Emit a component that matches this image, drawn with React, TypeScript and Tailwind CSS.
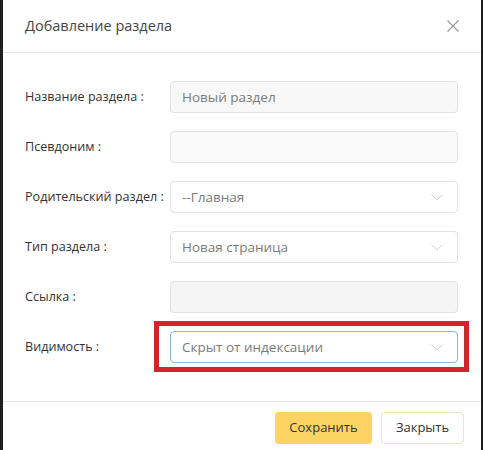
import React from 'react'

const font = { fontFamily: '"Open Sans", "Noto Sans", sans-serif' }

const Chevron = () => (
  <svg width="12" height="7" viewBox="0 0 12 7" fill="none" className="shrink-0 mr-[3px]">
    <path d="M0.5 0.5 L6 6 L11.5 0.5" stroke="#d2d2d2" strokeWidth="1" />
  </svg>
)

interface Row {
  label: string
  kind: 'input' | 'select'
  value?: string
  bg?: string
}

const rows: Row[] = [
  { label: 'Название раздела :', kind: 'input', value: 'Новый раздел', bg: 'bg-[#f8f8f8]' },
  { label: 'Псевдоним :', kind: 'input', bg: 'bg-[#fafafa]' },
  { label: 'Родительский раздел :', kind: 'select', value: '--Главная' },
  { label: 'Тип раздела :', kind: 'select', value: 'Новая страница' },
  { label: 'Ссылка :', kind: 'input', bg: 'bg-[#f5f5f5]' },
]

const Field: React.FC<{ row: Row }> = ({ row }) => (
  <div className="flex items-center">
    <div className="w-[145px] shrink-0 text-[12.6px] text-[#333]">{row.label}</div>
    <div
      className={`flex-1 h-[32px] rounded-[4px] border border-[#e2e2e2] px-[11px] flex items-center justify-between text-[13.5px] text-[#7a7a7a] ${
        row.kind === 'select' ? 'bg-white' : row.bg
      }`}
    >
      <span>{row.value}</span>
      {row.kind === 'select' && <Chevron />}
    </div>
  </div>
)

export default function App() {
  return (
    <div
      className="w-[483px] h-[450px] bg-white border-l-[3px] border-r-[2px] border-[#1e1e1e] flex flex-col overflow-hidden"
      style={font}
    >
      <div className="h-[53px] shrink-0 border-b border-[#e6e6e6] flex items-center justify-between pl-[22px] pr-[22px]">
        <span className="text-[14.5px] text-[#444]">Добавление раздела</span>
        <svg width="12" height="12" viewBox="0 0 12 12" fill="none">
          <path d="M0.5 0.5 L11.5 11.5 M11.5 0.5 L0.5 11.5" stroke="#999" strokeWidth="1.1" />
        </svg>
      </div>

      <div className="flex flex-col gap-[18px] pt-[28px] pb-[38px] pl-[22px] pr-[23px] border-b border-[#e6e6e6]">
        {rows.map((r) => (
          <Field key={r.label} row={r} />
        ))}
        <div className="flex items-center">
          <div className="w-[145px] shrink-0 text-[12.6px] text-[#333]">Видимость :</div>
          <div className="flex-1 relative">
            <span className="absolute -left-[16px] -right-[11px] -top-[10px] -bottom-[9px] border-[5px] border-[#d5232b] pointer-events-none" />
            <div className="h-[32px] rounded-[4px] border border-[#86b6d8] bg-white px-[11px] flex items-center justify-between text-[13.5px] text-[#7a7a7a]">
              <span>Скрыт от индексации</span>
              <Chevron />
            </div>
          </div>
        </div>
      </div>

      <div className="flex justify-end gap-[9px] pt-[10px] pr-[17px]">
        <button className="w-[97px] h-[32px] rounded-[4px] bg-[#fdd463] text-[13px] text-[#333]">
          Сохранить
        </button>
        <button className="w-[83px] h-[32px] rounded-[4px] bg-white border border-[#f3e6bf] text-[13px] text-[#333]">
          Закрыть
        </button>
      </div>
    </div>
  )
}
